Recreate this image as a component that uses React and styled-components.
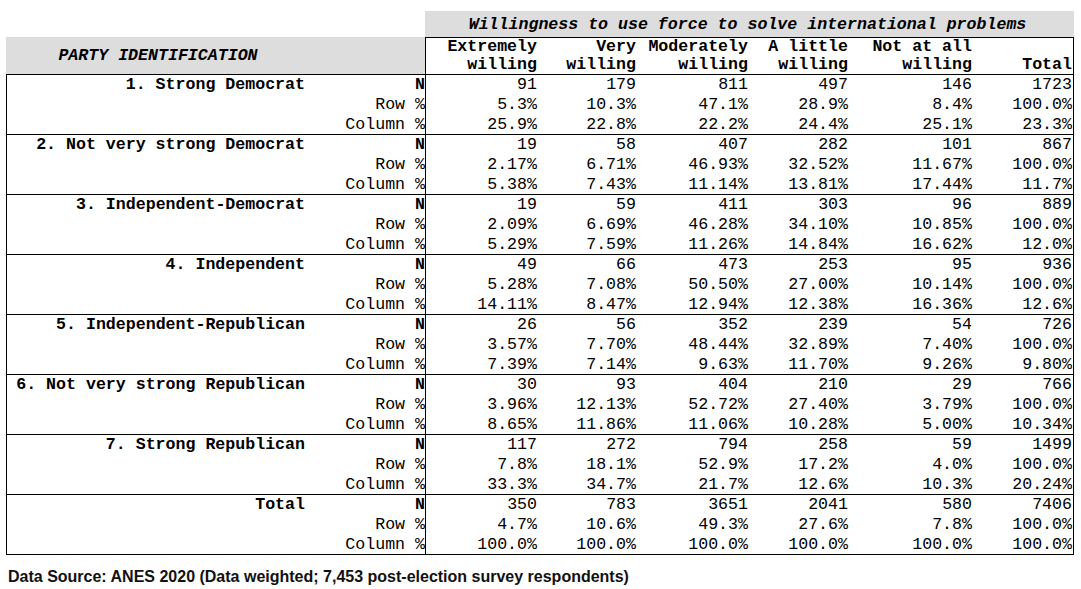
import React from "react";
import styled, { createGlobalStyle } from "styled-components";

const GlobalStyle = createGlobalStyle`
  html, body { margin: 0; padding: 0; background: #ffffff; }
  body { font-family: "Liberation Mono", "Courier New", monospace; color: #000; }
`;

const MONO = `"Liberation Mono", "Courier New", monospace`;
const FS = "16.6px";

const Page = styled.div`
  padding: 11px 0 0 6px;
  width: 1075px;
`;

const Table = styled.div`
  width: 1068px;
  font-family: ${MONO};
  font-size: ${FS};
`;

const TitleRow = styled.div`
  display: grid;
  grid-template-columns: 419px 649px;
  height: 26px;
`;

const TitleCell = styled.div`
  grid-column: 2;
  background: #dddddd;
  font-weight: bold;
  font-style: italic;
  text-align: center;
  line-height: 24px;
  padding: 2px 4px 0 0;
  font-size: 16.6px;
`;

const HeadRow = styled.div`
  display: grid;
  grid-template-columns: 419px 649px;
  height: 37px;
`;

const PartyHead = styled.div`
  background: #dddddd;
  display: grid;
  grid-template-columns: 304px 115px;
  align-items: center;
`;

const PartyHeadText = styled.div`
  text-align: center;
  font-weight: bold;
  font-style: italic;
  line-height: 20px;
`;

const DataHead = styled.div`
  border: 1px solid #000;
  border-bottom: none;
  display: grid;
  grid-template-columns: 112px 99px 112px 100px 124px 100px;
`;

const ColHead = styled.div`
  align-self: end;
  text-align: right;
  font-weight: bold;
  line-height: 18px;
  padding: 0 1px 0 0;
  white-space: pre;
`;

const Body = styled.div`
  border: 1px solid #000;
`;

const Group = styled.div`
  display: grid;
  grid-template-columns: 303px 116px 112px 99px 112px 100px 124px 100px;
  grid-template-rows: 20px 20px 19px;
  border-bottom: ${(p) => (p.$last ? "none" : "1px solid #000")};
  line-height: 20px;
`;

const PartyName = styled.div`
  grid-column: 1;
  grid-row: 1;
  text-align: right;
  font-weight: bold;
  padding-right: 5px;
  white-space: pre;
`;

const StatLabel = styled.div`
  grid-column: 2;
  text-align: right;
  border-right: 1px solid #000;
  font-weight: ${(p) => (p.$bold ? "bold" : "normal")};
  white-space: pre;
`;

const Value = styled.div`
  text-align: right;
  padding-right: 1px;
  white-space: pre;
`;

const Footer = styled.div`
  font-family: "Liberation Sans", Arial, sans-serif;
  font-weight: bold;
  font-size: 16px;
  line-height: 18px;
  margin-top: 13px;
  margin-left: 2px;
  color: #111;
`;

const headers = [
  "Extremely\nwilling",
  "Very\nwilling",
  "Moderately\nwilling",
  "A little\nwilling",
  "Not at all\nwilling",
  "Total",
];

const groups = [
  {
    name: "1. Strong Democrat",
    n: ["91", "179", "811", "497", "146", "1723"],
    row: ["5.3%", "10.3%", "47.1%", "28.9%", "8.4%", "100.0%"],
    col: ["25.9%", "22.8%", "22.2%", "24.4%", "25.1%", "23.3%"],
  },
  {
    name: "2. Not very strong Democrat",
    n: ["19", "58", "407", "282", "101", "867"],
    row: ["2.17%", "6.71%", "46.93%", "32.52%", "11.67%", "100.0%"],
    col: ["5.38%", "7.43%", "11.14%", "13.81%", "17.44%", "11.7%"],
  },
  {
    name: "3. Independent-Democrat",
    n: ["19", "59", "411", "303", "96", "889"],
    row: ["2.09%", "6.69%", "46.28%", "34.10%", "10.85%", "100.0%"],
    col: ["5.29%", "7.59%", "11.26%", "14.84%", "16.62%", "12.0%"],
  },
  {
    name: "4. Independent",
    n: ["49", "66", "473", "253", "95", "936"],
    row: ["5.28%", "7.08%", "50.50%", "27.00%", "10.14%", "100.0%"],
    col: ["14.11%", "8.47%", "12.94%", "12.38%", "16.36%", "12.6%"],
  },
  {
    name: "5. Independent-Republican",
    n: ["26", "56", "352", "239", "54", "726"],
    row: ["3.57%", "7.70%", "48.44%", "32.89%", "7.40%", "100.0%"],
    col: ["7.39%", "7.14%", "9.63%", "11.70%", "9.26%", "9.80%"],
  },
  {
    name: "6. Not very strong Republican",
    n: ["30", "93", "404", "210", "29", "766"],
    row: ["3.96%", "12.13%", "52.72%", "27.40%", "3.79%", "100.0%"],
    col: ["8.65%", "11.86%", "11.06%", "10.28%", "5.00%", "10.34%"],
  },
  {
    name: "7. Strong Republican",
    n: ["117", "272", "794", "258", "59", "1499"],
    row: ["7.8%", "18.1%", "52.9%", "17.2%", "4.0%", "100.0%"],
    col: ["33.3%", "34.7%", "21.7%", "12.6%", "10.3%", "20.24%"],
  },
  {
    name: "Total",
    n: ["350", "783", "3651", "2041", "580", "7406"],
    row: ["4.7%", "10.6%", "49.3%", "27.6%", "7.8%", "100.0%"],
    col: ["100.0%", "100.0%", "100.0%", "100.0%", "100.0%", "100.0%"],
  },
];

const stats = [
  { key: "n", label: "N", bold: true },
  { key: "row", label: "Row %" },
  { key: "col", label: "Column %" },
];

export default function App() {
  return (
    <>
      <GlobalStyle />
      <Page>
        <Table>
          <TitleRow>
            <TitleCell>Willingness to use force to solve international problems</TitleCell>
          </TitleRow>
          <HeadRow>
            <PartyHead>
              <PartyHeadText>PARTY IDENTIFICATION</PartyHeadText>
            </PartyHead>
            <DataHead>
              {headers.map((h, i) => (
                <ColHead key={i}>{h}</ColHead>
              ))}
            </DataHead>
          </HeadRow>
          <Body>
            {groups.map((g, gi) => (
              <Group key={g.name} $last={gi === groups.length - 1}>
                <PartyName>{g.name}</PartyName>
                {stats.map((s, si) => (
                  <React.Fragment key={s.key}>
                    <StatLabel $bold={s.bold} style={{ gridRow: si + 1 }}>
                      {s.label}
                    </StatLabel>
                    {g[s.key].map((v, vi) => (
                      <Value key={vi} style={{ gridRow: si + 1, gridColumn: vi + 3 }}>
                        {v}
                      </Value>
                    ))}
                  </React.Fragment>
                ))}
              </Group>
            ))}
          </Body>
        </Table>
        <Footer>Data Source: ANES 2020 (Data weighted; 7,453 post-election survey respondents)</Footer>
      </Page>
    </>
  );
}
